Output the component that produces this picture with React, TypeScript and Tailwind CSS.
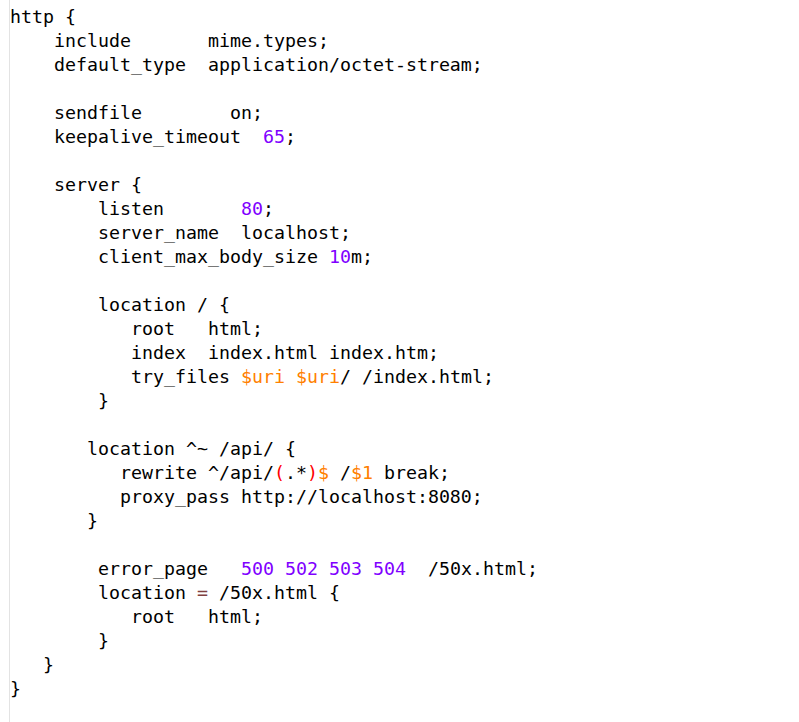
import React from 'react';
import type { FC, ReactNode } from 'react';

const N: FC<{ children: ReactNode }> = ({ children }) => <span className="text-[#8000ff]">{children}</span>;
const V: FC<{ children: ReactNode }> = ({ children }) => <span className="text-[#ff8000]">{children}</span>;
const R: FC<{ children: ReactNode }> = ({ children }) => <span className="text-[#ff0000]">{children}</span>;
const O: FC<{ children: ReactNode }> = ({ children }) => <span className="text-[#804040]">{children}</span>;

// one entry per row, indent kept as spaces (11px cells)
const lines: ReactNode[] = [
  'http {',
  '    include       mime.types;',
  '    default_type  application/octet-stream;',
  ' ',
  '    sendfile        on;',
  <>{'    keepalive_timeout  '}<N>65</N>;</>,
  ' ',
  '    server {',
  <>{'        listen       '}<N>80</N>;</>,
  '        server_name  localhost;',
  <>{'        client_max_body_size '}<N>10</N>m;</>,
  ' ',
  '        location / {',
  '           root   html;',
  '           index  index.html index.htm;',
  <>{'           try_files '}<V>$uri</V> <V>$uri</V>/ /index.html;</>,
  '        }',
  ' ',
  '       location ^~ /api/ {',
  <>{'          rewrite ^/api/'}<R>(</R>.*<R>)</R><V>$</V> /<V>$1</V> break;</>,
  '          proxy_pass http://localhost:8080;',
  '       }',
  ' ',
  <>{'        error_page   '}<N>500</N> <N>502</N> <N>503</N> <N>504</N>{'  /50x.html;'}</>,
  <>{'        location '}<O>=</O> /50x.html {'{'}</>,
  '           root   html;',
  '        }',
  '   }',
  '}',
];

const App: FC = () => {
  return (
    <div className="w-[799px] h-[722px] bg-white overflow-hidden">
      <div className="ml-[9px] h-full border-l border-[#e3e3e3] pt-[5px] text-black text-[18.27px] font-['DejaVu_Sans_Mono',monospace]">
        {lines.map((line, i) => (
          <div key={i} className="h-[24px] leading-[24px] whitespace-pre">
            {line}
          </div>
        ))}
      </div>
    </div>
  );
};

export default App;
